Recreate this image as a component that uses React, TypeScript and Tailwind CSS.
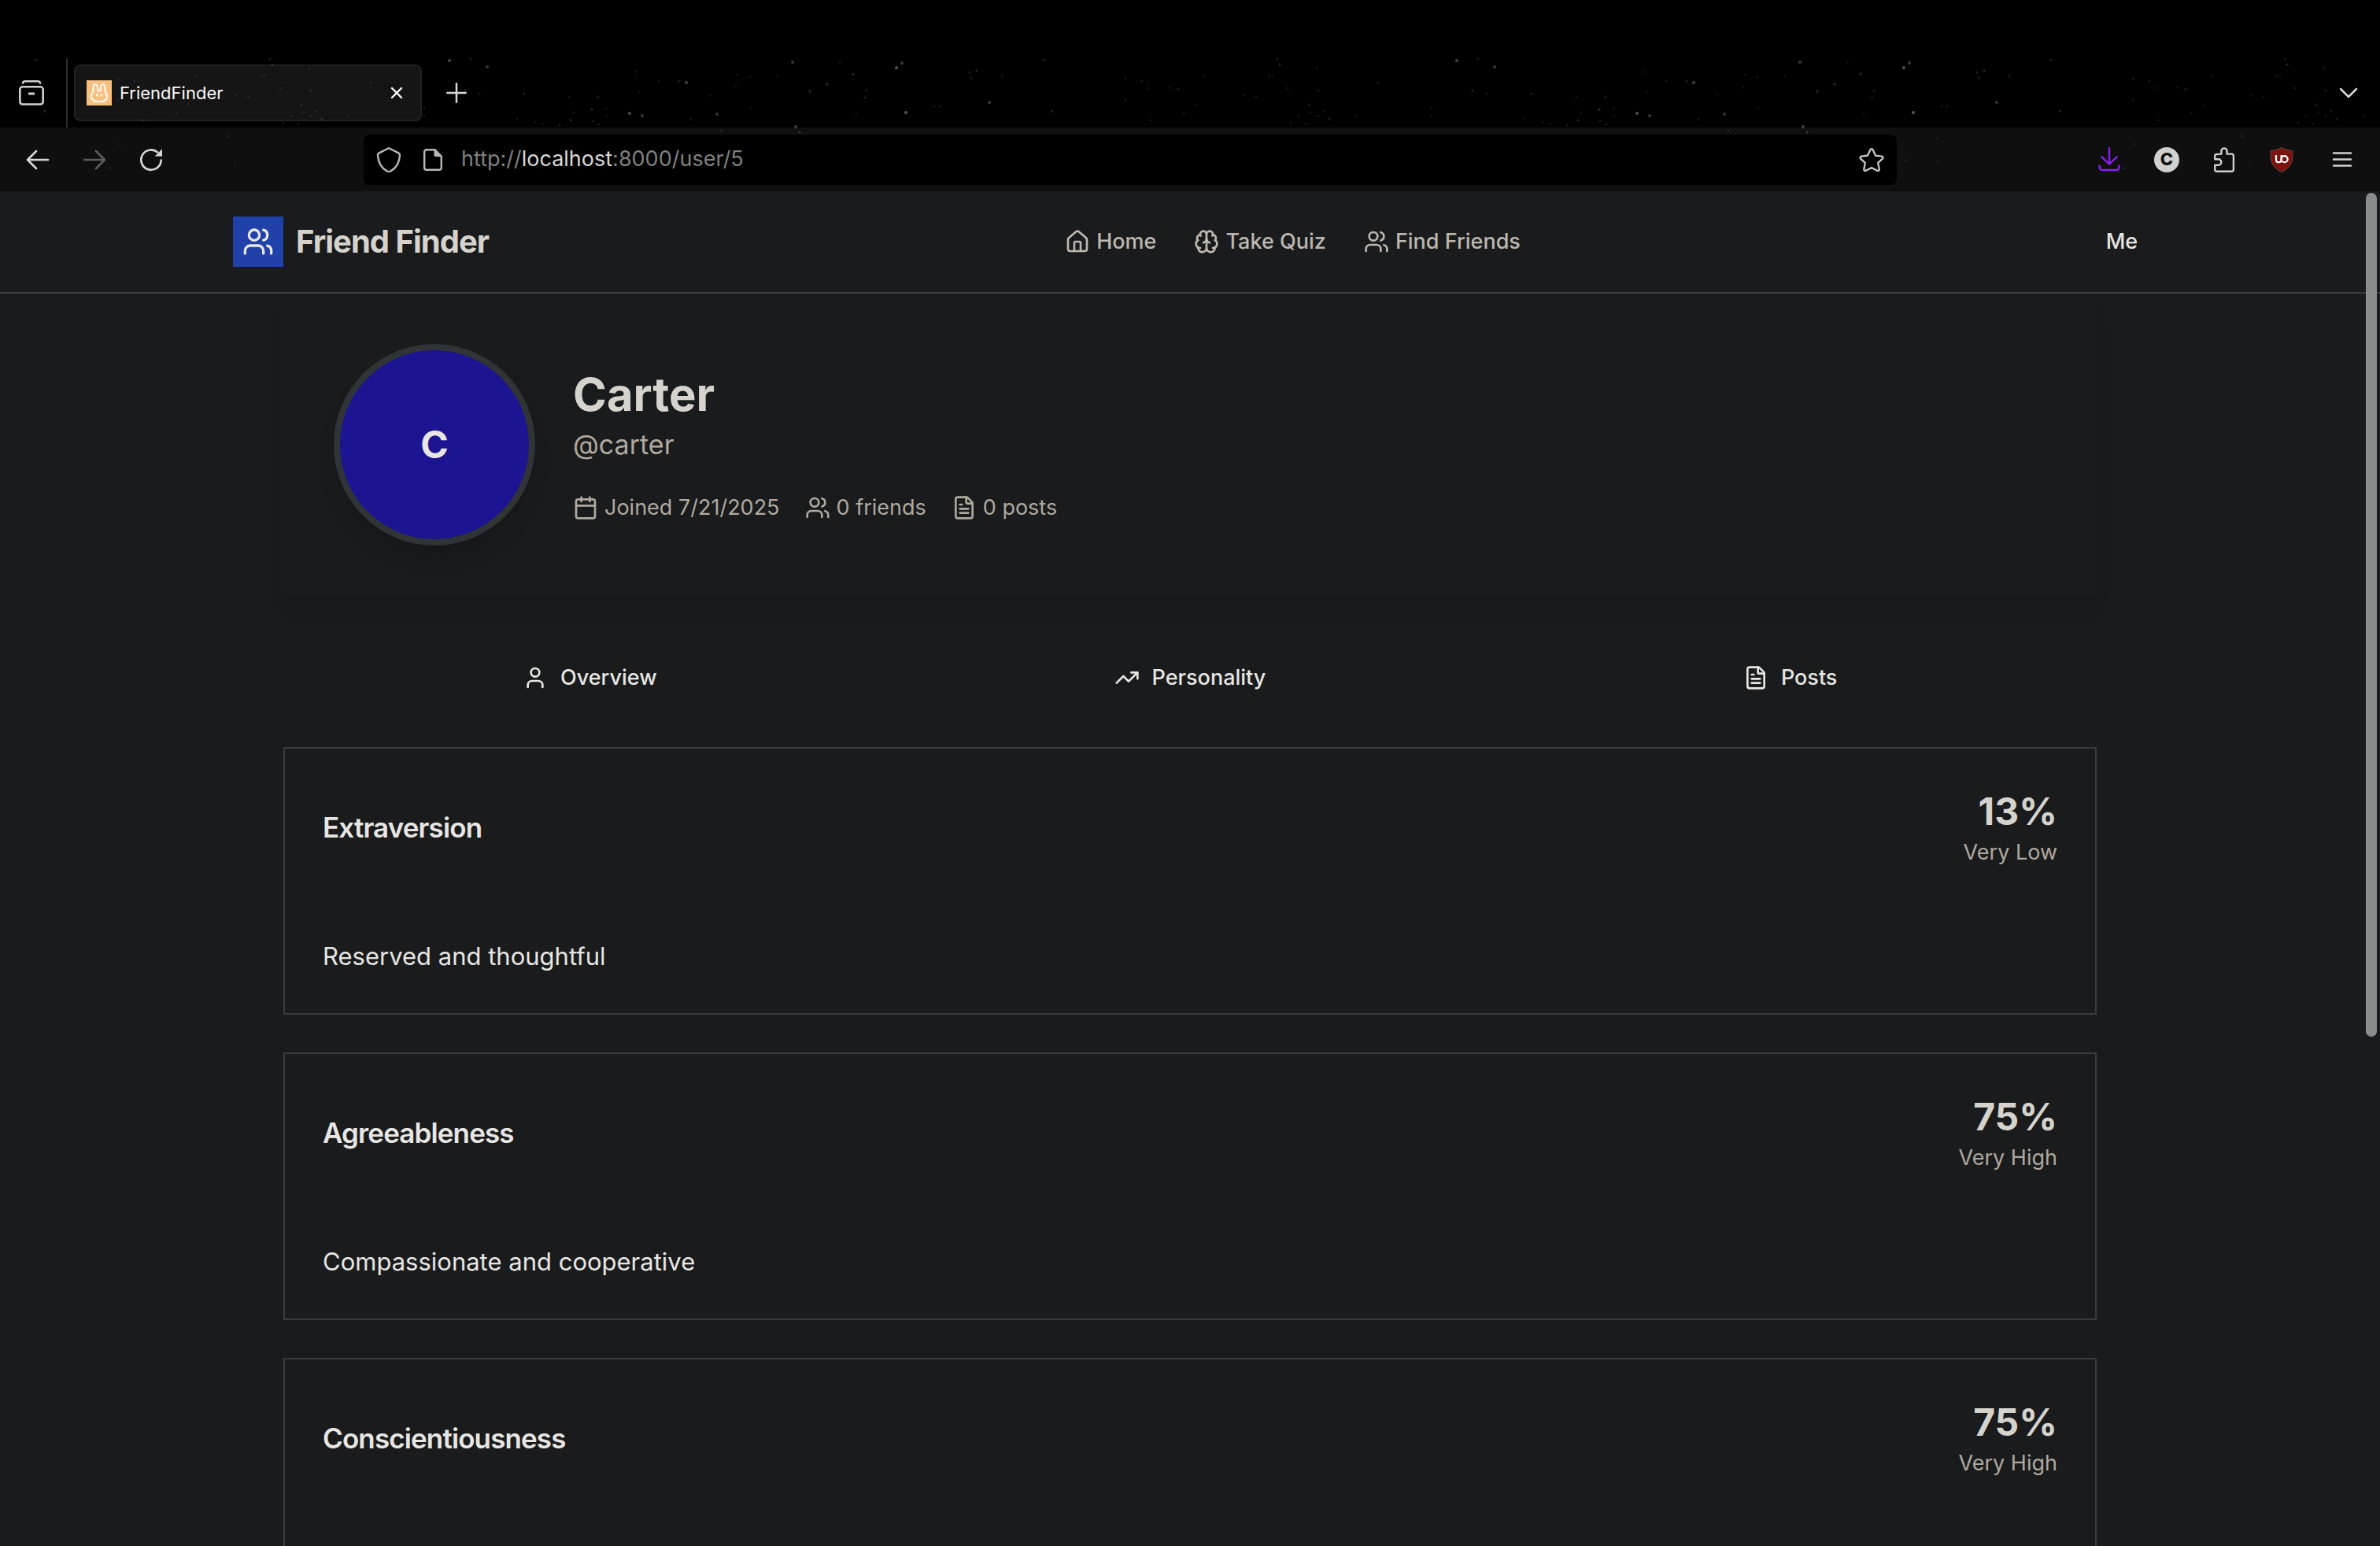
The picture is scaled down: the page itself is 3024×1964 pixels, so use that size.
import React from 'react';
import {
  Brain,
  Calendar,
  ChevronDown,
  FileText,
  House,
  Plus,
  TrendingUp,
  User,
  Users,
  X,
} from 'lucide-react';

type Star = [number, number, number];

// One tile of the theme's night sky: x, y, brightness
const stars: Star[] = [
  [571, 77, 0.26], [619, 85, 0.22], [1007, 79, 0.22], [1084, 94, 0.16], [1139, 86, 0.32],
  [1146, 80, 0.22], [863, 103, 0.12], [872, 105, 0.26], [1051, 107, 0.18], [1029, 116, 0.16],
  [1101, 115, 0.1], [1099, 124, 0.1], [1257, 130, 0.22], [1337, 141, 0.14], [800, 144, 0.3],
  [816, 147, 0.22], [911, 145, 0.2], [1151, 143, 0.34], [1011, 161, 0.24], [1016, 168, 0.16],
  [916, 166, 0.1], [666, 119, 0.14], [591, 115, 0.12], [609, 119, 0.08], [752, 139, 0.16],
  [725, 153, 0.14], [723, 123, 0.08], [1326, 76, 0.12], [1232, 92, 0.12], [1241, 90, 0.14],
  [1234, 99, 0.1], [1273, 97, 0.1], [1430, 100, 0.08], [1451, 103, 0.08], [1458, 112, 0.06],
  [1430, 127, 0.08], [1497, 113, 0.1], [1486, 111, 0.06], [1504, 144, 0.08], [1462, 153, 0.08],
  [1519, 133, 0.06], [760, 123, 0.1], [812, 116, 0.07], [808, 91, 0.06], [837, 103, 0.07],
  [937, 95, 0.06], [935, 111, 0.06], [953, 98, 0.06], [988, 97, 0.07], [1067, 79, 0.08],
  [902, 121, 0.06], [770, 138, 0.07], [771, 148, 0.07], [753, 154, 0.1], [729, 143, 0.08],
  [657, 151, 0.06], [680, 155, 0.08], [690, 157, 0.06], [711, 159, 0.1], [761, 158, 0.08],
  [878, 151, 0.08], [1187, 135, 0.08], [1194, 135, 0.08], [954, 137, 0.05], [1088, 145, 0.06],
  [598, 75, 0.1], [1569, 173, 0.09], [1141, 204, 0.08], [1419, 214, 0.07], [1432, 183, 0.06],
  [1579, 210, 0.05], [1181, 176, 0.06], [1182, 206, 0.05], [1626, 82, 0.14], [1623, 75, 0.1],
  [1613, 97, 0.08], [1663, 133, 0.1], [1665, 143, 0.06], [1689, 151, 0.1], [1650, 147, 0.06],
  [1675, 115, 0.1], [1673, 87, 0.08], [1636, 112, 0.08], [1617, 95, 0.06], [1682, 141, 0.07],
  [1675, 147, 0.08], [1659, 157, 0.08], [1640, 156, 0.08], [1819, 138, 0.1], [1819, 147, 0.08],
  [1751, 105, 0.07], [1596, 123, 0.08], [1580, 121, 0.06], [1530, 97, 0.05], [1723, 147, 0.05],
];

function StarField() {
  return (
    <svg className="pointer-events-none absolute inset-0 size-full" aria-hidden="true">
      <defs>
        <pattern id="sky" x="540" y="0" width="1280" height="243" patternUnits="userSpaceOnUse">
          {stars.map(([x, y, o], i) => (
            <circle key={i} cx={x - 540} cy={y} r={o > 0.18 ? 2 : 1.6} fill="#fff" opacity={o} />
          ))}
        </pattern>
      </defs>
      <rect width="100%" height="100%" fill="url(#sky)" />
    </svg>
  );
}

function SidebarIcon() {
  return (
    <svg width="32" height="32" viewBox="0 0 32 32" fill="none" stroke="#d0d0d0" strokeWidth="2.6" strokeLinecap="round">
      <path d="M5 3.5c.3-1.500 1.300-2.200 3-2.200h16c1.700 0 2.700.7 3 2.200" />
      <rect x="1.300" y="8.300" width="29.400" height="22.200" rx="3.500" />
      <path d="M12 17h8" strokeLinecap="butt" strokeWidth="3" />
    </svg>
  );
}

function BunnyIcon() {
  return (
    <svg width="32" height="32" viewBox="0 0 32 32">
      <rect width="32" height="32" fill="#f8c080" />
      <path
        d="M8.300 15C7.800 10 9 5 11 5s3.300 4 3.500 8.300h3C17.700 9 19 5 21 5s3.200 5 2.700 10c2 1.800 2.600 4 2.300 6.500-.6 3.700-4.600 5.700-10 5.700s-9.400-2-10-5.700c-.3-2.500.3-4.700 2.300-6.500z"
        fill="none"
        stroke="#fff8ee"
        strokeWidth="2.200"
        strokeLinejoin="round"
      />
      <ellipse cx="13.200" cy="18.700" rx="1.400" ry="1.900" fill="#fff8ee" />
      <ellipse cx="19" cy="18.700" rx="1.400" ry="1.900" fill="#fff8ee" />
    </svg>
  );
}

function ArrowIcon({ forward = false }: { forward?: boolean }) {
  return (
    <svg width="32" height="32" viewBox="0 0 32 32" fill="none" stroke={forward ? '#5e5e5e' : '#d8d8d8'} strokeWidth="2.600" strokeLinecap="round" strokeLinejoin="round">
      {forward ? <path d="M3 16h26M18 5l11 11-11 11" /> : <path d="M29 16H3M14 5L3 16l11 11" />}
    </svg>
  );
}

function ReloadIcon() {
  return (
    <svg width="32" height="32" viewBox="0 0 32 32" fill="none">
      <path d="M28.700 16.500A12.700 12.700 0 1 1 24 6.200" stroke="#d8d8d8" strokeWidth="2.600" strokeLinecap="round" />
      <path d="M30 2.300v9.300h-9.300z" fill="#d8d8d8" />
    </svg>
  );
}

function ShieldIcon() {
  return (
    <svg width="32" height="32" viewBox="0 0 32 32" fill="none" stroke="#b8b8b8" strokeWidth="2.400" strokeLinejoin="round">
      <path d="M14.700 1.700a3 3 0 0 1 2.600 0l11 5.700c1.200.7 1.800 1.600 1.700 3-.5 8.800-4 15.700-11.700 20a4 4 0 0 1-4.600 0C6 26.100 2.500 19.200 2 10.400c-.1-1.400.5-2.300 1.700-3z" />
    </svg>
  );
}

function PageIcon() {
  return (
    <svg width="32" height="32" viewBox="0 0 32 32" fill="none">
      <path d="M8 3.200h10.500l8.300 8.300V26a2.800 2.800 0 0 1-2.800 2.800H8A2.800 2.800 0 0 1 5.200 26V6A2.800 2.800 0 0 1 8 3.200z" stroke="#b8b8b8" strokeWidth="2.400" strokeLinejoin="round" />
      <path d="M17.500 2.500v7.500a2 2 0 0 0 2 2H27.500z" fill="#b8b8b8" />
    </svg>
  );
}

function StarIcon() {
  return (
    <svg width="32" height="32" viewBox="0 0 32 32" fill="none" stroke="#c8c8c8" strokeWidth="2.300" strokeLinejoin="round">
      <path d="M14.400 3.200a1.800 1.800 0 0 1 3.200 0l3.400 7.400 7.900 1c1.500.2 2.100 2 1 3l-5.700 5.300 1.500 8c.3 1.500-1.200 2.600-2.500 1.900L16 25.900l-7.200 3.900c-1.300.7-2.800-.4-2.500-1.900l1.500-8-5.700-5.300c-1.100-1-.5-2.800 1-3l7.900-1z" />
    </svg>
  );
}

function DownloadIcon() {
  return (
    <svg width="32" height="32" viewBox="0 0 32 32" fill="none" stroke="#8a1cf5" strokeWidth="2.400" strokeLinecap="round" strokeLinejoin="round">
      <path d="M16 1.200v20M6.500 12.300L16 21.500l9.500-9.200M3.700 23.500v2.500a3 3 0 0 0 3 3h18.600a3 3 0 0 0 3-3v-2.500" />
    </svg>
  );
}

function PuzzleIcon() {
  return (
    <svg width="32" height="32" viewBox="0 0 32 32" fill="none" stroke="#d0d0d0" strokeWidth="2.400" strokeLinejoin="round">
      <path d="M12.400 8.600V5a3.600 3.600 0 0 1 7.200 0v3.600h6a2.300 2.300 0 0 1 2.300 2.300v17.600a2.300 2.300 0 0 1-2.300 2.300H6.500a2.300 2.300 0 0 1-2.300-2.300v-5.700h4.300a3.800 3.800 0 0 0 0-7.600H4.200v-3.900a2.300 2.300 0 0 1 2.300-2.300z" />
    </svg>
  );
}

function UblockIcon() {
  return (
    <svg width="32" height="32" viewBox="0 0 32 32" fill="none">
      <path d="M16 .5c4 2.600 8.500 3.600 14 3.900C30.400 18 28.500 25.500 16 31.500 3.500 25.500 1.600 18 2 4.400 7.500 4.100 12 3.100 16 .5z" fill="#7c120e" stroke="#6b4444" strokeWidth="1" />
      <path d="M9 10v6.200a3 3 0 0 0 3 3h.6a3 3 0 0 0 3-3v-6.200" stroke="#fff" strokeWidth="2.200" />
      <circle cx="19.600" cy="15.200" r="4" stroke="#fff" strokeWidth="2.200" />
    </svg>
  );
}

function MenuIcon() {
  return (
    <svg width="32" height="32" viewBox="0 0 32 32" fill="none" stroke="#d0d0d0" strokeWidth="2.500" strokeLinecap="round">
      <path d="M5 7.500h22M5 15.500h22M5 23.500h22" />
    </svg>
  );
}

function BrowserChrome() {
  return (
    <div className="relative shrink-0 bg-black">
      <div className="h-[74px]" />
      <div className="flex h-[88px] items-center">
        <button aria-label="Tab overview" className="ml-6"><SidebarIcon /></button>
        <div className="ml-7 h-full w-[2px] bg-[#2c2c2c]" />
        <div className="ml-2 flex h-[72px] w-[442px] items-center rounded-lg border-2 border-[#222222] bg-[#151515] pr-[18px] pl-[14px]">
          <BunnyIcon />
          <span className="ml-[10px] flex-1 text-[22px] text-[#fafafa]">FriendFinder</span>
          <button aria-label="Close tab"><X className="size-6" color="#fafafa" strokeWidth={2.4} /></button>
        </div>
        <button aria-label="New tab" className="ml-6"><Plus className="size-10" color="#d8d8d8" strokeWidth={1.5} /></button>
        <button aria-label="List all tabs" className="mr-5 ml-auto"><ChevronDown className="size-10" color="#d8d8d8" strokeWidth={1.5} /></button>
      </div>
      <div className="flex h-[81px] items-center bg-[#0f0f0f] px-8">
        <div className="flex w-[430px] shrink-0 items-center gap-10">
          <button aria-label="Back"><ArrowIcon /></button>
          <button aria-label="Forward"><ArrowIcon forward /></button>
          <button aria-label="Reload"><ReloadIcon /></button>
        </div>
        <div className="relative z-10 flex h-16 flex-1 items-center rounded-lg bg-black px-4 text-[27px]">
          <ShieldIcon />
          <span className="ml-6"><PageIcon /></span>
          <span className="ml-5 flex-1 text-[#808080]">
            http://<span className="text-[#d8d8d8]">localhost</span>:8000/user/5
          </span>
          <button aria-label="Bookmark this page"><StarIcon /></button>
        </div>
        <div className="flex w-[582px] shrink-0 items-center justify-end gap-[41px]">
          <button aria-label="Downloads"><DownloadIcon /></button>
          <button aria-label="Account" className="flex size-8 items-center justify-center rounded-full bg-[#d0d0d0] text-[22px] font-extrabold text-[#0f0f0f]">C</button>
          <button aria-label="Extensions"><PuzzleIcon /></button>
          <button aria-label="uBlock Origin"><UblockIcon /></button>
          <button aria-label="Application menu" className="ml-1"><MenuIcon /></button>
        </div>
      </div>
      <StarField />
    </div>
  );
}

const navLinks = [
  { label: 'Home', Icon: House },
  { label: 'Take Quiz', Icon: Brain },
  { label: 'Find Friends', Icon: Users },
];

function SiteHeader() {
  return (
    <header className="border-b-2 border-[#393b3d]">
      <div className="mx-auto flex max-w-[2560px] items-center justify-between px-16 py-8">
        <a href="#" className="flex items-center gap-4">
          <span className="flex size-16 items-center justify-center bg-[#1f41a9]">
            <Users className="size-10" color="#e8e6e3" />
          </span>
          <span className="text-[40px] leading-[56px] font-bold tracking-tight text-[#d6d3cd]">Friend Finder</span>
        </a>
        <nav className="flex items-center gap-12 text-[27px] leading-10 font-medium text-[#bdb7af]">
          {navLinks.map(({ label, Icon }) => (
            <a key={label} href="#" className="flex items-center gap-2">
              <Icon className="size-8" />
              {label}
            </a>
          ))}
        </nav>
        <button className="w-16 text-center text-[27px] leading-10 font-medium text-[#e8e6e3]">Me</button>
      </div>
    </header>
  );
}

const stats = [
  { label: 'Joined 7/21/2025', Icon: Calendar },
  { label: '0 friends', Icon: Users },
  { label: '0 posts', Icon: FileText },
];

function ProfileCard() {
  return (
    <section className="flex items-center gap-12 p-16 shadow-[0_20px_30px_-6px_rgba(0,0,0,0.06),0_8px_12px_-8px_rgba(0,0,0,0.06)]">
      <div className="flex size-64 items-center justify-center rounded-full border-8 border-[#303436] bg-[#1c1491] text-[48px] font-bold text-[#e8e6e3] shadow-[0_20px_30px_-6px_rgba(0,0,0,0.1),0_8px_12px_-8px_rgba(0,0,0,0.1)]">
        C
      </div>
      <div>
        <h1 className="text-[58px] leading-[72px] font-bold text-[#d6d3cd]">Carter</h1>
        <p className="text-[34px] leading-[56px] text-[#b0a99f]">@carter</p>
        <ul className="mt-8 flex gap-8 text-[27px] leading-10 text-[#b0a99f]">
          {stats.map(({ label, Icon }) => (
            <li key={label} className="flex items-center gap-2">
              <Icon className="size-8" />
              {label}
            </li>
          ))}
        </ul>
      </div>
    </section>
  );
}

const tabs = [
  { label: 'Overview', Icon: User },
  { label: 'Personality', Icon: TrendingUp },
  { label: 'Posts', Icon: FileText },
];

const traits = [
  { name: 'Extraversion', score: '13%', level: 'Very Low', text: 'Reserved and thoughtful' },
  { name: 'Agreeableness', score: '75%', level: 'Very High', text: 'Compassionate and cooperative' },
  { name: 'Conscientiousness', score: '75%', level: 'Very High', text: '' },
];

export default function App() {
  return (
    <div className="flex h-screen flex-col overflow-hidden bg-[#191b1c] font-['Inter',sans-serif]">
      <BrowserChrome />
      <div className="relative min-h-0 flex-1 overflow-hidden">
        <SiteHeader />
        <main className="mx-auto max-w-[2304px]">
          <ProfileCard />
          <div role="tablist" className="mt-16 grid grid-cols-3 p-2 text-[27px] leading-10 font-medium text-[#e8e6e3]">
            {tabs.map(({ label, Icon }) => (
              <button key={label} role="tab" aria-selected={label === 'Personality'} className="flex h-16 items-center justify-center gap-4 aria-selected:shadow-[0_2px_4px_rgba(0,0,0,0.05)]">
                <Icon className="size-8" />
                {label}
              </button>
            ))}
          </div>
          <div className="mt-12 flex flex-col gap-12">
            {traits.map((t) => (
              <article key={t.name} className="border-2 border-[#393b3d] p-12">
                <div className="flex items-center justify-between">
                  <h2 className="text-[35px] leading-[56px] font-semibold tracking-tight text-[#e8e6e3]">{t.name}</h2>
                  <div className="text-right">
                    <div className="text-[48px] leading-[64px] font-bold text-[#d6d3cd]">{t.score}</div>
                    <div className="text-[27px] leading-10 text-[#b0a99f]">{t.level}</div>
                  </div>
                </div>
                <p className="mt-[88px] min-h-12 text-[31px] leading-[48px] text-[#e8e6e3]">{t.text}</p>
              </article>
            ))}
          </div>
        </main>
        <div className="absolute top-[2px] right-1 h-[1072px] w-[14px] rounded-full bg-[#8b8c8c]" />
      </div>
    </div>
  );
}
